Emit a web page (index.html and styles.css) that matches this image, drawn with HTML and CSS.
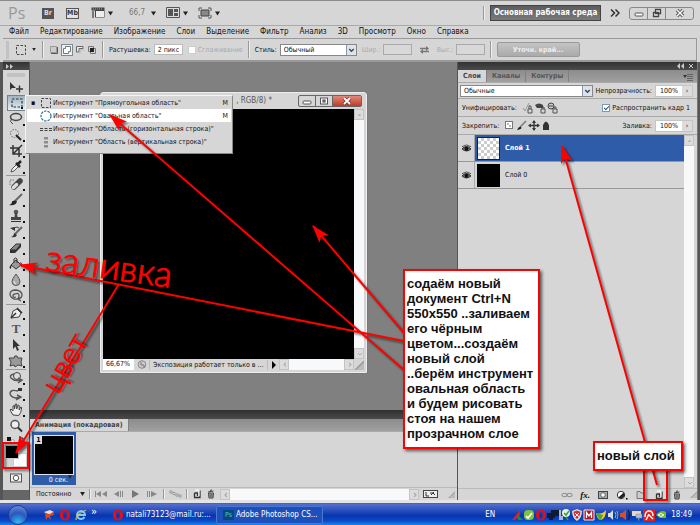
FILE: index.html
```
<!DOCTYPE html>
<html lang="ru">
<head>
<meta charset="utf-8">
<title>Adobe Photoshop</title>
<link rel="stylesheet" href="styles.css">
</head>
<body>
<svg class="defs" aria-hidden="true">
  <defs>
    <symbol id="down" viewBox="0 0 6 5"><path d="M0 0h6L3 5z" fill="#222"/></symbol>
    <symbol id="chev" viewBox="0 0 10 10"><path d="M2.500 4L5 6.500 7.500 4" fill="none" stroke="#2b4a6e" stroke-width="1.600"/></symbol>
    <symbol id="marquee" viewBox="0 0 12 12"><rect x="1.500" y="1.500" width="9" height="9" fill="none" stroke="#444" stroke-dasharray="2.500 1.500"/></symbol>
    <symbol id="page" viewBox="0 0 10 10"><path d="M2 8.500h6V1.500M2.500 4v4.500M2.500 4h3v3" fill="none" stroke="#333" stroke-width="1.300"/><path d="M3 1h4v6" fill="none" stroke="#fff"/></symbol>
    <symbol id="trash" viewBox="0 0 10 10"><path d="M2.500 4h5l-.5 5H3zM2 3l5.500-1M4 1.500l2-.6" fill="#aaa" stroke="#444"/><path d="M4.300 5v3M5.800 5v3" stroke="#333" stroke-width=".6"/></symbol>
    <symbol id="eye" viewBox="0 0 12 10"><path d="M1 5.500Q6 0 11 5.500 6 10 1 5.500z" fill="#777" stroke="#222"/><circle cx="6" cy="5.300" r="2.200" fill="#111"/><path d="M1 3L6 1l5 2" stroke="#444" fill="none"/></symbol>
    <symbol id="opera" viewBox="0 0 12 12"><path fill-rule="evenodd" d="M6 .5C9 .5 11 3 11 6s-2 5.500-5 5.500S1 9 1 6 3 .5 6 .5zM6 2C4.500 2 4.200 4 4.200 6S4.500 10 6 10s1.800-2 1.800-4S7.500 2 6 2z" fill="#e0101a"/></symbol>
    <symbol id="grip" viewBox="0 0 8 8"><path d="M0 8L8 0v8z" fill="#bbb"/><path d="M1 8L8 1" stroke="#999"/></symbol>
    <symbol id="left" viewBox="0 0 10 10"><path d="M6 3L4 5l2 2" fill="none" stroke="#aaa" stroke-width="1.200"/></symbol>
    <symbol id="right" viewBox="0 0 10 10"><path d="M4 3l2 2-2 2" fill="none" stroke="#aaa" stroke-width="1.200"/></symbol>
  </defs>
</svg>
<div class="app">
  <header class="appbar">
    <span class="logo">Ps</span>
    <button class="chip" aria-label="Bridge">Br</button>
    <button class="chip light" aria-label="Mini Bridge">Mb</button>
    <button class="drop" aria-label="Дополнения"><svg width="14" height="12" viewBox="0 0 14 12"><path d="M.5.500h13v10H4v-7H.5z" fill="#444"/><path d="M5 4h8v6H5z" fill="#eee"/><path d="M1 4h2v7H1z" fill="#777"/><path d="M2 2h10" stroke="#aaa" stroke-dasharray="1 1"/></svg><svg width="5" height="5"><use href="#down"/></svg></button>
    <button class="drop zoomer">66,7<svg width="5" height="5"><use href="#down"/></svg></button>
    <button class="drop" aria-label="Упорядочить"><svg width="14" height="12" viewBox="0 0 14 12"><path d="M.5.500h13v10H.5z" fill="#ddd" stroke="#555"/><path d="M2 2h5v7H2zM8 2h4v3H8zM8 6h4v3H8z" fill="#555"/></svg><svg width="5" height="5"><use href="#down"/></svg></button>
    <button class="drop" aria-label="Режим экрана"><svg width="14" height="12" viewBox="0 0 14 12"><path d="M3 3h8v6H3z" fill="#888" stroke="#444"/><path d="M1 4V1h3M10 1h3v3M1 8v3h3M10 11h3V8" fill="none" stroke="#555"/></svg><svg width="5" height="5"><use href="#down"/></svg></button>
    <span class="vline push"></span>
    <button class="workspace-btn">Основная рабочая среда</button>
    <svg class="more" width="10" height="8" viewBox="0 0 10 8"><path d="M1 .5L4.500 4 1 7.500M5.500.500L9 4 5.500 7.500" fill="none" stroke="#333" stroke-width="1.500"/></svg>
    <div class="winctl">
      <button aria-label="Свернуть"><svg width="10" height="10" viewBox="0 0 10 10"><rect x="1" y="5" width="8" height="3" rx="1" fill="#fff" stroke="#555"/></svg></button>
      <button aria-label="Восстановить"><svg width="10" height="10" viewBox="0 0 10 10"><path d="M3.500 1.500h5v4h-5zM1.500 4.500h5v4h-5z" fill="#eee" stroke="#444" stroke-width="1.300"/></svg></button>
      <button class="wide" aria-label="Закрыть"><svg width="10" height="10" viewBox="0 0 10 10"><path d="M2 2l6 6M8 2L2 8" stroke="#555" stroke-width="3.200"/><path d="M2 2l6 6M8 2L2 8" stroke="#fff" stroke-width="1.400"/></svg></button>
    </div>
  </header>

  <nav class="menubar">
    <button>Файл</button><button>Редактирование</button><button>Изображение</button><button>Слои</button><button>Выделение</button><button>Фильтр</button><button>Анализ</button><button>3D</button><button>Просмотр</button><button>Окно</button><button>Справка</button>
  </nav>

  <section class="options">
    <span class="grip"></span>
    <button class="drop tool-preset" aria-label="Инструмент"><svg width="12" height="12"><use href="#marquee"/></svg><svg width="4" height="3"><use href="#down"/></svg></button>
    <span class="vline"></span>
    <div class="modes">
      <button aria-label="Новая"><svg width="10" height="10" viewBox="0 0 10 10"><path d="M1.500 1.500h6v6h-6z" fill="#ccc" stroke="#999"/><path d="M2 8.500h6.500V2" stroke="#555" fill="none"/></svg></button>
      <button class="on" aria-label="Добавить"><svg width="10" height="10" viewBox="0 0 10 10"><path d="M3.500 1.500h5v5h-2v2h-5v-5h2z" fill="#fff" stroke="#777"/></svg></button>
      <button aria-label="Вычесть"><svg width="10" height="10" viewBox="0 0 10 10"><path d="M1.500 7V1.500H8v2H4V7z" fill="#eee" stroke="#666"/><path d="M5 9V5h4" stroke="#bbb" fill="none"/></svg></button>
      <button aria-label="Пересечение"><svg width="10" height="10" viewBox="0 0 10 10"><path d="M1.500 1.500h5v5h-5zM3.500 3.500h5v5h-5z" fill="none" stroke="#777"/><path d="M3 3h4v4H3z" fill="#222"/></svg></button>
    </div>
    <span class="vline"></span>
    <label for="feather">Растушевка:</label><input id="feather" class="field" value="2 пикс">
    <label class="check off"><input type="checkbox" disabled>Сглаживание</label>
    <span class="vline"></span>
    <label for="style">Стиль:</label>
    <span class="combo style"><select id="style"><option>Обычный</option></select><svg width="10" height="10"><use href="#chev"/></svg></span>
    <label class="dim" for="w">Шир.:</label><input id="w" class="field empty" disabled>
    <svg class="swap" width="9" height="8" viewBox="0 0 9 8"><path d="M0 2.500h7M2 5.500h7" stroke="#777" stroke-width="1.300"/><path d="M6 0l3 2.500L6 5zM3 3L0 5.500 3 8z" fill="#777"/></svg>
    <label class="dim" for="h">Выс.:</label><input id="h" class="field empty" disabled>
    <span class="vline"></span>
    <button class="refine" disabled>Уточн. край...</button>
  </section>

  <main class="work">
    <aside class="tools">
      <div class="dark"><svg width="7" height="5" viewBox="0 0 7 5"><path d="M0 0l3 2.500L0 5zM4 0l3 2.500L4 5z" fill="#ccc"/></svg></div>
      <div class="handle"></div>
      <button aria-label="Перемещение"><svg viewBox="0 0 16 14"><path d="M2 2v8l2-2h4z" fill="#333"/><path d="M8 9h7M11.500 5.500v7" stroke="#333" stroke-width="1.400"/></svg></button>
      <button class="sel more-tools" aria-label="Прямоугольная область"><svg viewBox="0 0 16 14"><rect x="3" y="3" width="10" height="8" fill="none" stroke="#333" stroke-width="1.200" stroke-dasharray="2.500 1.500"/></svg></button>
      <button class="more-tools" aria-label="Лассо"><svg viewBox="0 0 16 14"><ellipse cx="8" cy="5" rx="5.500" ry="3.500" fill="none" stroke="#444" stroke-width="1.500"/><path d="M3.500 7l-1 2.500L5 12" fill="none" stroke="#444"/></svg></button>
      <button class="more-tools" aria-label="Быстрое выделение"><svg viewBox="0 0 16 14"><circle cx="6.500" cy="5.500" r="4" fill="none" stroke="#666" stroke-dasharray="1.500 1.200"/><path d="M8 7l5 5" stroke="#222" stroke-width="2"/></svg></button>
      <button class="more-tools" aria-label="Рамка"><svg viewBox="0 0 16 14"><path d="M5 1v9h9M2 4h9v9M11 4l3-3M5 10l6-6" fill="none" stroke="#333" stroke-width="1.500"/></svg></button>
      <button class="more-tools" aria-label="Пипетка"><svg viewBox="0 0 16 14"><path d="M3 12l1-3 5-5 2 2-5 5z" fill="#eee" stroke="#555"/><path d="M8 3l4 4M10 4l3-3" stroke="#222" stroke-width="2.500"/></svg></button>
      <hr>
      <button class="more-tools" aria-label="Восстанавливающая кисть"><svg viewBox="0 0 16 14"><path d="M6 10l6-6" stroke="#444" stroke-width="5.500" stroke-linecap="round"/><path d="M5.500 10.500l3-3" stroke="#ddd" stroke-width="3.500" stroke-linecap="round"/><path d="M2 8V3h4" fill="none" stroke="#777" stroke-dasharray="1.500 1"/></svg></button>
      <button class="more-tools" aria-label="Кисть"><svg viewBox="0 0 16 14"><path d="M7 8l7-7" stroke="#666" stroke-width="2"/><path d="M1 12q3-1 3-3.500 3-2 5 0Q8 13 1 12z" fill="#222"/></svg></button>
      <button class="more-tools" aria-label="Штамп"><svg viewBox="0 0 16 14"><circle cx="8" cy="3" r="2.300" fill="#555"/><path d="M7 4h2l.5 4H13v3H3V8h3.500z" fill="#444"/><path d="M3 12.500h10" stroke="#333"/></svg></button>
      <button class="more-tools" aria-label="Архивная кисть"><svg viewBox="0 0 16 14"><path d="M7 9l7-7" stroke="#666" stroke-width="2"/><path d="M3 12q3-1 3-4l3 2Q8 13 3 12zM2 3l5-1v4z" fill="#333"/><path d="M5 3q5-2 6 0" fill="none" stroke="#444"/></svg></button>
      <button class="more-tools" aria-label="Ластик"><svg viewBox="0 0 16 14"><path d="M2 9l6-6h5l-5 6z" fill="#888" stroke="#333"/><path d="M2 9v3h5l6-6V3L8 9z" fill="#333"/></svg></button>
      <button class="more-tools" aria-label="Заливка"><svg viewBox="0 0 16 14"><path d="M3 8l5-5 5 5-5 4z" fill="#999" stroke="#333"/><path d="M6 6V2q1.500-2 3 0v4" fill="none" stroke="#333"/><path d="M3 8q-2 1-1 4 2-1 1-4zM12 5q3 1 2 6z" fill="#222"/></svg></button>
      <button class="more-tools" aria-label="Размытие"><svg viewBox="0 0 16 14"><path d="M8 1q-4 5-4 7.500a4 4 0 0 0 8 0Q12 6 8 1z" fill="#aaa" stroke="#555"/><path d="M6 8q0 3 2 3" stroke="#eee" fill="none"/></svg></button>
      <button class="more-tools" aria-label="Осветлитель"><svg viewBox="0 0 16 14"><path d="M2 5q0-4 6-4 6 1 6 5 0 3-4 4l3 2M2 5q0 3 4 5 5 1 5-3T7 5q-2 0-2 2t3 1" fill="none" stroke="#555" stroke-width="1.300"/></svg></button>
      <hr>
      <button class="more-tools" aria-label="Перо"><svg viewBox="0 0 16 14"><path d="M3 12l2-7 4-2 4 4-2 4-8 1z" fill="#eee" stroke="#444"/><path d="M3 12l5-5M9 2l5 5" stroke="#333" stroke-width="1.500"/></svg></button>
      <button class="more-tools glyph" aria-label="Текст">T</button>
      <button class="more-tools" aria-label="Выделение контура"><svg viewBox="0 0 16 14"><path d="M5 1v10l2.500-2.500L9 13l2-1-2-4h3z" fill="#333"/></svg></button>
      <button class="more-tools" aria-label="Фигура"><svg viewBox="0 0 16 14"><path d="M6 4q0-3 3-2l1 2h4l-1 4 1 4-4-1-3 2-1-2-4 1 1-4-2-4z" fill="#999" stroke="#444"/></svg></button>
      <hr>
      <button class="more-tools" aria-label="3D вращение"><svg viewBox="0 0 16 14"><circle cx="9" cy="5" r="3.500" fill="#ddd" stroke="#444"/><path d="M6 3Q1 4 3 7q4 4 10 2M10 12l4-3-4-2" fill="none" stroke="#555" stroke-width="1.400"/></svg></button>
      <button class="more-tools" aria-label="3D камера"><svg viewBox="0 0 16 14"><path d="M10 4Q3 2 2 6q0 4 6 5l5-1M8 13l5-3-4-2" fill="none" stroke="#555" stroke-width="1.400"/><path d="M10 1h4v3h-4z" fill="#333"/></svg></button>
      <button class="more-tools" aria-label="Рука"><svg viewBox="0 0 16 14"><path d="M5 12L2 7l1-1 2 2V3l1.500-.5V6l1-5h1.200v5l1.500-4 1 .5V7l1.500-3 1 .5-1 5-2 3z" fill="#eee" stroke="#444"/></svg></button>
      <button aria-label="Масштаб"><svg viewBox="0 0 16 14"><circle cx="7" cy="5.500" r="4" fill="#eee" stroke="#555" stroke-width="1.500"/><path d="M10 8.500l4 4" stroke="#333" stroke-width="2"/></svg></button>
      <div class="mini"><svg width="22" height="9" viewBox="0 0 22 9"><path d="M2 2h4v4H2z" fill="#111"/><path d="M6 5h3v3H6z" fill="#fff" stroke="#777" stroke-width=".6"/><path d="M15 3h3v4M15 1v4M16 7h4" fill="none" stroke="#222"/></svg></div>
      <div class="swatches"><span class="back"></span><span class="front"></span></div>
      <button class="mask" aria-label="Быстрая маска"><svg viewBox="0 0 16 14"><rect x="2.500" y="3" width="11" height="8" fill="#eee" stroke="#555"/><circle cx="8" cy="7" r="2.700" fill="#fff" stroke="#555"/></svg></button>
      <div class="tail"></div>
    </aside>

    <div class="center">
      <div class="canvas">
        <section class="doc">
          <div class="doc-title"><i class="doc-ico"></i><span>, RGB/8) *</span>
            <div class="doc-ctl"><button aria-label="Свернуть"><svg width="10" height="10" viewBox="0 0 10 10"><rect x="1" y="5" width="8" height="3" rx="1" fill="#fff" stroke="#555"/></svg></button><button aria-label="Развернуть"><svg width="10" height="10" viewBox="0 0 10 10"><rect x="1.500" y="2" width="7" height="6" fill="#fff" stroke="#555"/><rect x="4" y="4" width="2" height="2" fill="#fff" stroke="#333"/></svg></button><button class="close" aria-label="Закрыть"><svg width="10" height="10" viewBox="0 0 10 10"><path d="M2 2l6 6M8 2L2 8" stroke="#733" stroke-width="3.200"/><path d="M2 2l6 6M8 2L2 8" stroke="#fff" stroke-width="1.800"/></svg></button></div>
          </div>
          <div class="doc-body"><div class="art"></div><div class="vbar"><i><svg width="10" height="10" viewBox="0 0 10 10"><path d="M3 6l2-2v2" fill="none" stroke="#aaa"/></svg></i><i><svg width="10" height="10" viewBox="0 0 10 10"><path d="M3 4l2 2 2-2" fill="none" stroke="#aaa"/></svg></i></div></div>
          <div class="doc-status"><span class="pct">66,67%</span><svg class="clock-ico" width="15" height="11" viewBox="0 0 15 11"><circle cx="8" cy="5.500" r="3.800" fill="#ccc" stroke="#888"/><path d="M7 3v3h3v3" fill="none" stroke="#777"/></svg><span class="msg">Экспозиция работает только в ...</span><svg class="play" width="11" height="8" viewBox="0 0 11 8"><path d="M4 0l4 4-4 4z"/></svg><div class="hbar"><i><svg width="10" height="9"><use href="#left"/></svg></i><i><svg width="10" height="9"><use href="#right"/></svg></i></div><svg width="10" height="10"><use href="#grip"/></svg></div>
        </section>
      </div>
      <section class="anim">
        <div class="dark"></div>
        <div class="tabs"><button class="active">Анимация (покадровая)</button></div>
        <div class="frames"><div class="frame"><div class="thumb"><b>1</b></div><span>0 сек.<svg width="4" height="4"><use href="#down"/></svg></span></div></div>
        <div class="transport">
          <button class="loop">Постоянно<svg width="5" height="4"><use href="#down"/></svg></button>
          <span class="vline"></span>
          <button aria-label="К первому"><svg width="13" height="8" viewBox="0 0 13 8"><path d="M6 1v6L1 4zM12 1v6L7 4z" fill="#888"/><path d="M.5 1v6" stroke="#888"/></svg></button>
          <button aria-label="Назад"><svg width="13" height="8" viewBox="0 0 13 8"><path d="M7 1v6L2 4z" fill="#888"/><path d="M8.500 1v6M10.500 1v6" stroke="#888"/></svg></button>
          <button aria-label="Воспроизвести"><svg width="13" height="8" viewBox="0 0 13 8"><path d="M3 0v8l7-4z" fill="#777"/></svg></button>
          <button aria-label="Вперёд"><svg width="13" height="8" viewBox="0 0 13 8"><path d="M5 1v6l6-3z" fill="#888"/><path d="M1.500 1v6M3.500 1v6" stroke="#888"/></svg></button>
          <span class="vline"></span>
          <button aria-label="Промежуточные кадры"><svg width="13" height="8" viewBox="0 0 13 8"><g fill="none" stroke="#999"><circle cx="2" cy="2" r="1.300"/><circle cx="5" cy="3.500" r="1.300"/><circle cx="8" cy="5" r="1.300"/><circle cx="11" cy="6" r="1.300"/></g></svg></button>
          <span class="vline"></span>
          <button aria-label="Новый кадр"><svg width="10" height="10"><use href="#page"/></svg></button>
          <button aria-label="Удалить кадр"><svg width="10" height="10"><use href="#trash"/></svg></button>
          <div class="hbar"><i><svg width="10" height="10"><use href="#left"/></svg></i><i><svg width="10" height="10"><use href="#right"/></svg></i></div>
          <svg width="15" height="8" viewBox="0 0 15 8"><rect x=".5" y=".5" width="14" height="7" fill="#eee" stroke="#444"/><path d="M3 2v4h3M7 3h3l2 2M8 5l3-3" stroke="#333" fill="none"/></svg>
          <svg class="end" width="7" height="7"><use href="#grip"/></svg>
        </div>
      </section>
    </div>

    <aside class="layers">
      <div class="dark"><svg width="17" height="6" viewBox="0 0 17 6"><path d="M3 0v6L0 3zM7 0v6L4 3z" fill="#ccc"/><path d="M12 1l4 4M16 1l-4 4" stroke="#ccc"/></svg></div>
      <div class="tabs"><button class="active">Слои</button><button>Каналы</button><button>Контуры</button><svg width="10" height="8" viewBox="0 0 10 8"><path d="M0 2h4L2 5z" fill="#333"/><path d="M4 1.500h6M4 3.500h6M4 5.500h6M4 7.500h6" stroke="#555" stroke-width=".8"/></svg></div>
      <div class="prow blend">
        <span class="combo grow"><select aria-label="Режим наложения"><option>Обычные</option></select><svg width="10" height="10"><use href="#chev"/></svg></span>
        <label for="op">Непрозрачность:</label><span class="num"><input id="op" value="100%"><button aria-label="Непрозрачность">›</button></span>
      </div>
      <div class="prow">
        <span class="cap">Унифицировать:</span>
        <svg width="36" height="12" viewBox="0 0 36 12"><g fill="none" stroke="#555"><path d="M1 6l2 3 4-8" stroke="#999"/><path d="M6 7h4v4H6zM7 7V4h2v3M19 7h4v4h-4zM20 7V5h2v2M31 7h4v4h-4zM32 7V5h2v2"/></g><path d="M13 3q4-3 8 0v3h-6z" fill="#444"/><circle cx="29" cy="4" r="3" fill="#ccc" stroke="#444"/><path d="M27 4h4" stroke="#444"/></svg>
        <label class="check right"><input type="checkbox" checked>Распространить кадр 1</label>
      </div>
      <div class="prow">
        <span class="cap">Закрепить:</span>
        <svg width="46" height="11" viewBox="0 0 46 11"><rect x="1.500" y="1.500" width="7" height="7" fill="#fff" stroke="#777"/><path d="M3 3h2v2H3zM5 5h2v2H5z" fill="#bbb"/><path d="M16 7l6-6" stroke="#777" stroke-width="1.500"/><path d="M13 10q2-4 4-3 2 2-4 3z" fill="#222"/><path d="M30 1v9M25.500 5.500h9" stroke="#333" stroke-width="1.300"/><path d="M28 3l2-3 2 3zM28 8l2 3 2-3zM27 3.500l-3 2 3 2zM33 3.500l3 2-3 2z" fill="#333"/><path d="M39 5q3-7 6 0v5h-6z" fill="#333"/></svg>
        <label class="right" for="fill">Заливка:</label><span class="num"><input id="fill" value="100%"><button aria-label="Заливка">›</button></span>
      </div>
      <div class="list">
        <ul>
          <li class="picked"><span class="vis"><svg width="11" height="9"><use href="#eye"/></svg></span><i class="pic clear"></i><b>Слой 1</b></li>
          <li><span class="vis"><svg width="11" height="9"><use href="#eye"/></svg></span><i class="pic"></i><span>Слой 0</span></li>
        </ul>
        <div class="vbar"><i><svg width="10" height="10" viewBox="0 0 10 10"><path d="M3 6l2-2v2" fill="none" stroke="#aaa"/></svg></i><i><svg width="10" height="10" viewBox="0 0 10 10"><path d="M3 4l2 2 2-2" fill="none" stroke="#aaa"/></svg></i></div>
      </div>
      <div class="panel-foot">
        <button aria-label="Связать"><svg width="12" height="10" viewBox="0 0 12 10"><ellipse cx="3.500" cy="5" rx="2.700" ry="1.700" fill="none" stroke="#888"/><ellipse cx="8.500" cy="5" rx="2.700" ry="1.700" fill="none" stroke="#888"/></svg></button>
        <button class="fx">fx.</button>
        <button aria-label="Маска"><svg width="12" height="10" viewBox="0 0 12 10"><rect x="1.500" y="1.500" width="9" height="7" fill="#aaa" stroke="#444"/><circle cx="6" cy="5" r="2.300" fill="#fff" stroke="#666"/></svg></button>
        <button aria-label="Корректирующий слой"><svg width="12" height="10" viewBox="0 0 12 10"><circle cx="5" cy="5" r="3.700" fill="#fff" stroke="#333"/><path d="M7.600 2.400A3.700 3.700 0 0 1 2.400 7.600z" fill="#222"/><path d="M10 8h1.500v1.500H10z"/></svg></button>
        <button aria-label="Группа"><svg width="12" height="10" viewBox="0 0 12 10"><path d="M2 8.500h7.500V3H6L5 1.500H2z" fill="#ccc" stroke="#777"/></svg></button>
        <button aria-label="Новый слой"><svg width="10" height="10"><use href="#page"/></svg></button>
        <button aria-label="Удалить"><svg width="12" height="10"><use href="#trash"/></svg></button>
        <svg width="7" height="7"><use href="#grip"/></svg>
      </div>
    </aside>
  </main>

  <footer class="taskbar">
    <button class="orb" aria-label="Пуск"></button>
    <div class="quick">
      <svg width="12" height="12" viewBox="0 0 12 12"><path d="M1 3l6-2 4 2-5 3z" fill="#e8e0d0"/><path d="M2 4l5 1 3-2 1 3-4 1 1 4-3-3-2 3z" fill="#d64a28"/></svg>
      <svg width="12" height="12"><use href="#opera"/></svg>
      <svg width="12" height="12" viewBox="0 0 12 12"><path d="M9.500 8A4 4 0 1 1 10 6H3" fill="none" stroke="#7ccdf8" stroke-width="2"/><path d="M1 11Q0 6 11 1" fill="none" stroke="#f2c940"/></svg>
      <span>»</span>
    </div>
    <button class="task"><svg width="12" height="12"><use href="#opera"/></svg>natali73123@mail.ru:...</button>
    <button class="task current"><i>Ps</i>Adobe Photoshop CS...</button>
    <div class="tray">
      <span class="lang">EN</span>
      <svg width="12" height="12" viewBox="0 0 12 12"><path d="M1 11L9 1v5L4 11z" fill="#e02020"/><path d="M6 7l1-1 5 5H7z" fill="#17903c"/></svg>
      <svg width="12" height="12" viewBox="0 0 12 12"><rect x="1" y="1" width="10" height="10" rx="4" fill="#7cc33c"/><path d="M3 7l2 2 4-5" fill="none" stroke="#fff" stroke-width="1.600"/></svg>
      <svg width="12" height="12"><use href="#opera"/></svg>
      <svg width="12" height="12" viewBox="0 0 12 12"><path d="M4 1h8v6H4zM0 4h8v5H0zM2 9h4v2H2z" fill="#111a30"/></svg>
      <svg width="12" height="12" viewBox="0 0 12 12"><circle cx="7" cy="4" r="4" fill="#e8f5e0"/><path d="M5 4l2 2 3-4M7 8l2 3" fill="none" stroke="#38a030" stroke-width="1.500"/><path d="M1 1v10M3 7v4" stroke="#ddd" stroke-width="1.500"/></svg>
      <svg width="12" height="12" viewBox="0 0 12 12"><path d="M6 0l5 2q0 7-5 10Q1 9 1 2z" fill="#ddd"/><path d="M6 1.500l3.500 1.300Q9 8 6 10 3 8 2.500 2.800z" fill="#d83030"/><path d="M4 4l4 4M8 4L4 8" stroke="#fff"/></svg>
      <svg width="12" height="12" viewBox="0 0 12 12"><path d="M1 1h10v10H1z" fill="#b01820" stroke="#eee"/><path d="M3.500 9V3.500L6 7l2.500-3.500V9" fill="none" stroke="#fff" stroke-width="1.300"/></svg>
      <svg width="12" height="12" viewBox="0 0 12 12"><path d="M1 4q6 2 10-3 0 8-5 10-4 0-5-7z" fill="#f0c828"/><path d="M1 4q2 6 5 7l2-5z" fill="#48a838"/></svg>
      <svg width="12" height="12" viewBox="0 0 12 12"><path d="M1 4h2l3-3v10L3 8H1z" fill="#ddd"/><path d="M8 3q2 3 0 6M10 2q2 4 0 8" fill="none" stroke="#6fd06f"/></svg>
      <svg width="12" height="12" viewBox="0 0 12 12"><path d="M1 4h2l4-3v10L3 8H1z" fill="#d05030"/><path d="M9 1q3 5 0 10" fill="none" stroke="#222" stroke-width="1.500"/></svg>
      <svg width="12" height="12" viewBox="0 0 12 12"><path d="M1 2h9v5H1z" fill="#e8d8c0"/><path d="M5 5h6v4H5zM7 9h1v3" fill="#a8bfe8" stroke="#888" stroke-width=".5"/></svg>
      <svg width="12" height="12" viewBox="0 0 12 12"><path d="M0 0h12v12H0z" fill="#e02020"/><path d="M2 8q0-6 4-6t4 5M6 5l-3 6M6 6l4 4" fill="none" stroke="#fff" stroke-width="1.400"/></svg>
      <svg width="12" height="12" viewBox="0 0 12 12"><path d="M1 6q5-6 10-3v6H5z" fill="#78b830"/><path d="M3 6q3-3 6 0-3 3-6 0z" fill="none" stroke="#fff"/></svg>
      <time>18:49</time>
    </div>
  </footer>
</div>

<menu class="flyout">
  <li><i class="dot">▪</i><svg width="12" height="12"><use href="#marquee"/></svg><span>Инструмент "Прямоугольная область"</span><kbd>M</kbd></li>
  <li class="hover"><i class="dot"></i><svg width="12" height="12" viewBox="0 0 12 12"><circle cx="6" cy="6" r="5" fill="none" stroke="#357199" stroke-width="1.200" stroke-dasharray="2.500 1"/></svg><span>Инструмент "Овальная область"</span><kbd>M</kbd></li>
  <li><i class="dot"></i><svg width="12" height="12" viewBox="0 0 12 12"><path d="M0 5.500h12M0 7.500h12" stroke="#444" stroke-dasharray="3 1.500"/></svg><span>Инструмент "Область (горизонтальная строка)"</span></li>
  <li><i class="dot"></i><svg width="12" height="12" viewBox="0 0 12 12"><path d="M5 1v11M7 1v11" stroke="#444" stroke-dasharray="2.500 1.500"/></svg><span>Инструмент "Область (вертикальная строка)"</span></li>
</menu>

<svg class="notes" width="700" height="525" viewBox="0 0 700 525" aria-hidden="true">
  <defs><marker id="head" viewBox="0 0 18 12" refX="17" refY="6" markerWidth="18" markerHeight="12" markerUnits="userSpaceOnUse" orient="auto"><path d="M0 0L18 6 0 12 4 6z" fill="#f00"/></marker></defs>
  <g class="ink">
    <path d="M404 370L110 115" marker-end="url(#head)"/>
    <path d="M404 333L313 226" marker-end="url(#head)"/>
    <path d="M404 341L20 265" marker-end="url(#head)"/>
    <path d="M119 284L16 453" marker-end="url(#head)"/>
    <path d="M657 485L562 146" marker-end="url(#head)"/>
    <rect x="3" y="443" width="25" height="25"/>
    <rect x="644" y="466" width="23" height="34"/>
  </g>
</svg>
<span class="scrawl fill-word">заливка</span>
<span class="scrawl color-word">цвет</span>
<p class="note main-note">содаём новый<br>документ Ctrl+N<br>550x550 ..заливаем<br>его чёрным<br>цветом...создаём<br>новый слой<br>..берём инструмент<br>овальная область<br>и будем рисовать<br>стоя на нашем<br>прозрачном слое</p>
<p class="note layer-note">новый слой</p>
</body>
</html>
```

FILE: styles.css
```
* { box-sizing: border-box; }
body { margin: 0; font: 7px/12px "DejaVu Sans Condensed", "DejaVu Sans", sans-serif; color: #111; background: #d6d6d6; overflow: hidden; }
button, input, select { font: inherit; color: inherit; margin: 0; padding: 0; border: 0; background: none; border-radius: 0; }
button { display: flex; align-items: center; justify-content: center; white-space: nowrap; }
svg { display: block; flex: none; }
label, span { white-space: nowrap; }
i { font-style: normal; }
.defs { position: absolute; width: 0; height: 0; }
.app { display: flex; flex-direction: column; height: 100vh; }

.appbar { display: flex; align-items: center; height: 25px; padding: 0 6px 0 8px; border-top: 1px solid #8c8c8c; background: #d6d6d6; }
.logo { width: 34px; font: 16px/20px "Open Sans", sans-serif; color: #999; }
.chip { width: 12px; height: 11px; margin-right: 12px; background: #555; color: #ddd; font-weight: bold; }
.chip.light { background: #e2e2e2; color: #333; border: 1px solid #555; width: 13px; }
.drop { gap: 3px; margin-right: 10px; }
.zoomer { gap: 6px; margin-left: 6px; color: #777; font-size: 8px; }
.vline { width: 2px; align-self: stretch; margin: 2px 5px; border-left: 1px solid #999; border-right: 1px solid #eee; }
.push { margin: 5px 5px 5px auto; }
.workspace-btn { width: 111px; height: 16px; background: linear-gradient(#5c5c5c, #7a7a7a); border: 1px solid #444; color: #fff; font-size: 8px; font-weight: bold; }
.more { margin: 0 9px; }
.winctl { display: flex; border: 1px solid #888; border-radius: 3px; }
.winctl button { width: 18px; height: 11px; border-right: 1px solid #888; }
.winctl .wide { width: 27px; border: 0; }

.menubar { display: flex; gap: 11px; height: 13px; padding: 0 9px; border-top: 1px solid #aaa; font-size: 8px; }

.options { display: flex; align-items: center; height: 24px; margin: 0 3px; border: 1px solid #999; border-width: 1px 1px 2px 0; background: #d6d6d6; }
.grip { width: 3px; height: 18px; margin: 0 6px 0 3px; background: #c2c2c2; }
.tool-preset { gap: 5px; margin-right: 1px; }
.modes { display: flex; align-items: center; gap: 2px; }
.modes .on { width: 12px; height: 12px; border: 1px solid #7e8a94; background: #e8f0f4; }
.field { width: 29px; height: 11px; margin: 0 5px 0 3px; padding: 0 3px; background: #fff; border: 1px solid #bbb; }
.field.empty { background: #d8d8d8; border-color: #aaa; margin: 0 0 0 2px; }
.check { display: flex; align-items: center; gap: 2px; }
.check input { appearance: none; width: 8px; height: 8px; background: #fff; border: 1px solid #7a98b8; display: grid; place-items: center; }
.check input:checked::before { content: ""; width: 4px; height: 2px; border: solid #2b5a94; border-width: 0 0 1px 1px; rotate: -45deg; }
.check.off { color: #aaa; }
.check.off input { border-color: #ccc; }
.combo { position: relative; display: flex; height: 12px; }
.combo select { appearance: none; width: 100%; padding: 0 3px; background: #fff; border: 1px solid #888; line-height: 10px; }
.combo svg { position: absolute; right: 1px; top: 1px; background: #dfe3e8; border-left: 1px solid #8a98a8; }
.style { width: 77px; margin: 0 5px 0 3px; }
.dim { color: #aaa; }
.swap { margin: 0 8px; }
.refine { width: 83px; height: 15px; border: 1px solid #999; border-radius: 2px; background: linear-gradient(#c4c4c4, #aaa); color: #eee; font-weight: bold; }

.work { display: grid; grid-template-columns: 26px minmax(0, 1fr) 240px; gap: 0 1px; flex: 1; min-height: 0; padding: 0 2px 0 3px; background: #555; border: solid #e4e4e4; border-width: 0 0 3px; }
.dark { height: 8px; flex: none; background: linear-gradient(#333, #4a4a4a); display: flex; align-items: center; padding: 0 3px; }

.tools { display: flex; flex-direction: column; background: #d6d6d6; min-height: 0; }
.handle { height: 4px; margin: 3px 4px 2px; background: #c2c2c2; }
.tools button { position: relative; height: 16px; flex: none; }
.tools button svg { width: 16px; height: 14px; margin-right: 1px; }
.tools .sel { margin: 0 1px 0 4px; background: linear-gradient(#9fb2c0, #e8eef2); border: 1px solid #74828c; }
.more-tools::after { content: ""; position: absolute; right: 4px; bottom: 1px; width: 2px; height: 2px; background: #111; }
.tools .glyph { font: bold 13px/16px "Liberation Serif", serif; color: #555; }
.tools hr { width: 20px; height: 1px; flex: none; margin: 0 auto; border: 0; background: #999; }
.mini { height: 10px; padding: 1px 2px; }
.swatches { display: grid; grid-template: 22px / 22px; margin: 1px 2px; }
.swatches span { grid-area: 1 / 1; width: 14px; height: 14px; border: 1px solid #ccc; }
.front { background: #000; }
.back { background: #fff; place-self: end; }
.tools .mask { margin-top: 2px; }
.tail { flex: 1; margin-top: 4px; background: #666; }

.center { display: flex; flex-direction: column; min-width: 0; }
.canvas { position: relative; flex: 1; background: #808080; }
.doc { position: absolute; left: 70px; top: 30px; width: 267px; padding: 0 2px 2px; background: #d6d6d6; border: 1px solid #eee; border-radius: 3px 3px 0 0; box-shadow: 0 0 1px #444; }
.doc-title { display: flex; align-items: center; height: 16px; color: #555; }
.doc-title span { margin-left: auto; margin-right: 26px; font-size: 8px; }
.doc-ico { width: 10px; height: 12px; background: #35a8dc; }
.doc-ctl { display: flex; margin-right: 2px; border: 1px solid #666; border-radius: 2px; }
.doc-ctl button { width: 17px; height: 10px; border-right: 1px solid #666; }
.doc-ctl .close { width: 28px; border: 0; background: linear-gradient(#e08a7c, #c03a24); }
.doc-body { display: flex; height: 250px; }
.art { flex: 1; background: #000; }
.vbar { display: flex; flex-direction: column; justify-content: space-between; width: 10px; background: #f8f9fa; }
.vbar i, .hbar i { display: grid; place-items: center; width: 10px; height: 11px; background: #dcdcdc; border: 1px solid #c4c4c4; }
.hbar { display: flex; justify-content: space-between; background: #f8f9fa; }
.doc-status { display: flex; align-items: center; height: 11px; }
.pct { width: 31px; background: #fff; padding-left: 3px; line-height: 11px; }
.msg { flex: 1; padding-left: 3px; border: solid #bbb; border-width: 0 1px; line-height: 10px; }
.doc-status .hbar { width: 75px; }

.anim { display: flex; flex-direction: column; height: 90px; background: #d6d6d6; border-top: 1px solid #333; }
.tabs { display: flex; align-items: stretch; height: 13px; flex: none; background: linear-gradient(#8c8c8c, #a0a0a0); border-bottom: 1px solid #aaa; }
.tabs button { padding: 0 5px; color: #555; font-weight: bold; border-right: 1px solid #808080; }
.tabs .active { background: #d6d6d6; color: #444; }
.tabs svg { margin: 3px 4px 0 auto; }
.frames { flex: 1; padding: 0 2px; }
.frame { display: flex; flex-direction: column; align-items: flex-end; width: 44px; padding: 3px 2px 0; background: #2f5ca8; color: #fff; }
.thumb { width: 40px; height: 40px; background: #000; border: 1px solid #dde6f4; }
.thumb b { display: block; width: 7px; background: #ddd; color: #000; text-align: center; line-height: 8px; }
.frame span { display: flex; line-height: 10px; padding-right: 2px; }
.transport { display: flex; align-items: center; height: 13px; padding: 0 2px 0 6px; gap: 4px; border-top: 1px solid #bbb; }
.transport .vline { margin: 1px 0; }
.loop { gap: 9px; }
.transport .hbar { flex: 1; }
.end { margin-left: 6px; }

.layers { display: flex; flex-direction: column; min-height: 0; background: #d6d6d6; border-right: 1px solid #777; }
.layers .dark { justify-content: flex-end; }
.prow { display: flex; align-items: center; height: 18px; flex: none; padding: 0 4px; border-bottom: 1px solid #aaa; }
.blend { height: 16px; padding-left: 2px; }
.grow { flex: 1; }
.prow label { padding: 0 3px; }
.cap { margin-right: 5px; }
.prow .right { margin-left: auto; }
.num { display: flex; height: 12px; border: 1px solid #c4c4c4; }
.num input { width: 26px; padding: 0 4px; background: #fff; }
.num button { width: 10px; background: #dcdcdc; }
.list { display: flex; flex: 1; min-height: 0; margin-right: 3px; }
.list ul { flex: 1; margin: 0; padding: 0; list-style: none; }
.list li { display: flex; align-items: center; height: 27px; border-bottom: 1px solid #999; }
.vis { display: grid; place-items: center; width: 17px; align-self: stretch; background: #d6d6d6; border-right: 1px solid #aaa; }
.list .picked { background: #2f5ca8; color: #fff; }
.pic { width: 23px; height: 23px; margin: 0 5px 0 2px; background: #000; }
.pic.clear { border: 1px solid #222; background: repeating-conic-gradient(#ccc 0 25%, #fff 0 50%) 0 0 / 6px 6px; }
.panel-foot { display: flex; align-items: center; justify-content: flex-end; gap: 7px; height: 12px; flex: none; border-top: 1px solid #bbb; }
.fx { font: italic bold 9px/10px "Liberation Serif", serif; }

.taskbar { display: flex; align-items: center; height: 22px; flex: none; padding: 0 8px; color: #fff; font: 8px/12px "DejaVu Sans Condensed", "DejaVu Sans", sans-serif; border-top: 1px solid #5b6580; background: linear-gradient(#5470cc, #2b4fbe 30%, #0836ae 55%, #0b48c8 80%, #1688e8); }
.orb { width: 20px; height: 20px; border-radius: 50%; background: radial-gradient(circle at 50% 90%, #30b8f0, #2858c0 50%, #8098d8); border: 1px solid #20388c; }
.quick { display: flex; align-items: center; gap: 4px; width: 84px; padding-left: 15px; font-size: 11px; }
.quick span { padding-bottom: 6px; }
.task { gap: 2px; width: 104px; height: 18px; justify-content: flex-start; }
.task.current { width: 107px; padding-left: 6px; border: 1px solid #4878d0; background: #1d50bc; border-radius: 2px; }
.task i { width: 11px; background: #064a78; color: #4cc4f0; font-size: 7px; line-height: 10px; text-align: center; }
.tray { display: flex; align-items: center; margin-left: auto; }
.lang { margin-right: 16px; }
time { margin-left: 4px; }

.flyout { position: absolute; left: 25px; top: 95px; width: 208px; margin: 0; padding: 0 1px 5px; list-style: none; background: #d6d6d6; border: 1px solid #f4f4f4; border-right-color: #888; border-bottom-color: #888; }
.flyout li { display: flex; align-items: center; height: 13px; }
.flyout .hover { background: #fff; }
.dot { flex: none; width: 13px; padding-left: 4px; }
.flyout svg { margin-right: 1px; }
kbd { margin-left: auto; padding-right: 3px; font: inherit; }

.notes { position: absolute; left: 0; top: 0; filter: drop-shadow(2px 2px 1px #0008); }
.ink { fill: none; stroke: #f00; stroke-width: 2; }
.scrawl { position: absolute; color: #f00; font: 300 36px/36px Lato, sans-serif; -webkit-text-stroke: 1px #f00; text-shadow: 2px 2px 2px #0008; }
.fill-word { left: 46px; top: 247px; rotate: 8deg; }
.color-word { left: 32px; top: 347px; font-size: 30px; line-height: 30px; rotate: -60deg; }
.note { position: absolute; margin: 0; background: #fff; border: 2px solid #f00; box-shadow: 2px 2px 3px #0009; color: #111; font: bold 13px/15px "Liberation Sans", sans-serif; white-space: nowrap; }
.main-note { left: 403px; top: 269px; width: 137px; padding: 5px 2px 6px; }
.layer-note { left: 593px; top: 441px; width: 90px; padding: 5px 2px 6px; }
```
